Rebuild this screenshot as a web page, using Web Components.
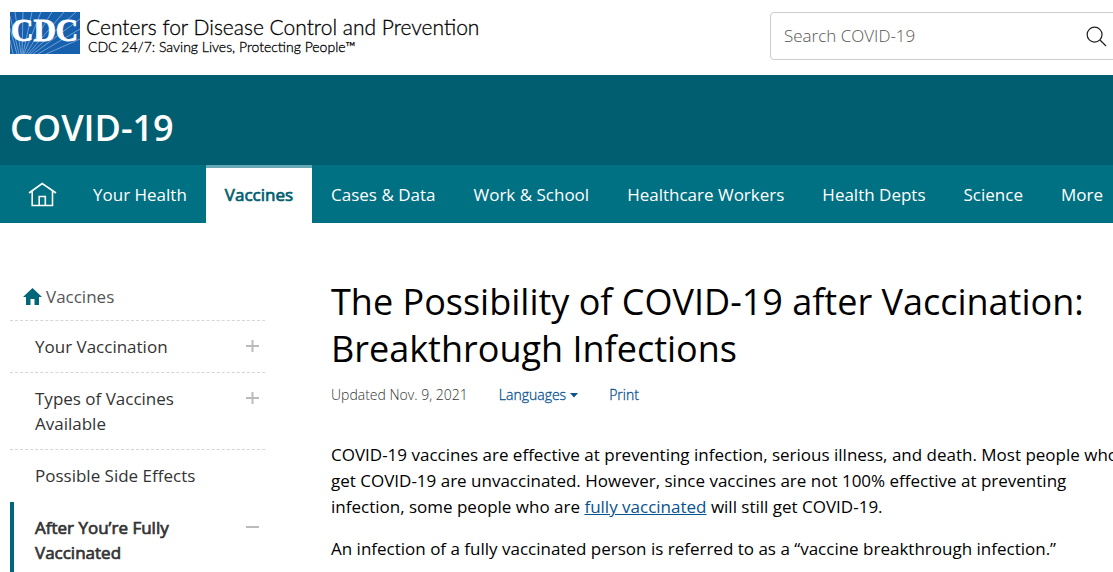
<!DOCTYPE html>
<html lang="en">
<head>
<meta charset="utf-8">
<title>The Possibility of COVID-19 after Vaccination: Breakthrough Infections</title>
<style>
  html, body { margin: 0; background: #fff; }
  body { font: 17px/26px "Open Sans", "Noto Sans", sans-serif; color: #000; overflow: hidden; }
</style>
</head>
<body>
<cdc-header></cdc-header>
<site-banner>COVID-19</site-banner>
<topic-nav></topic-nav>
<page-layout>
  <side-nav slot="side">
    <side-item mark="+">Your Vaccination</side-item>
    <side-item mark="+">Types of Vaccines Available</side-item>
    <side-item>Possible Side Effects</side-item>
    <side-item mark="-" current>After You’re Fully Vaccinated</side-item>
  </side-nav>
  <article-body>
    <span slot="title">The Possibility of COVID-19 after Vaccination: Breakthrough Infections</span>
    <span slot="date">Updated Nov. 9, 2021</span>
  </article-body>
</page-layout>

<script>
const define = (name, html, setup) => customElements.define(name, class extends HTMLElement {
  constructor() {
    super();
    this.attachShadow({ mode: "open" }).innerHTML = html;
  }
  connectedCallback() { if (setup) setup(this, this.shadowRoot); }
});

define("cdc-logo", `
<style>
  :host { display: block; }
  a { display: flex; gap: 6px; color: #000; text-decoration: none; }
  svg { display: block; flex: none; }
  .words { display: grid; align-content: start; padding-top: 3px; white-space: nowrap; font-family: Lato, sans-serif; }
  .name { font-size: 21px; line-height: 24px; font-weight: 300; -webkit-text-stroke: 0.3px #000; }
  .tag { font-size: 14px; line-height: 16px; padding-left: 2px; font-weight: 300; -webkit-text-stroke: 0.3px #000; }
</style>
<a href="#">
  <svg width="70" height="42" viewBox="0 0 70 42" role="img" aria-label="CDC">
    <rect width="70" height="42" fill="#1660ad"/>
    <g stroke="#a9cdf0" stroke-width="0.6" fill="none">
      <path d="M7 42L0 16M9 42L0 4M11 42L5 0M12 42L13 0M13 42L22 0M14 42L31 0M16 42L42 0M18 42L54 0M20 42L66 0M23 42L70 7M28 42L70 17M36 42L70 27M3 42L0 28"/>
    </g>
    <text x="1" y="29" font-family="Liberation Serif, serif" font-weight="700" font-size="31" fill="#fff" stroke="#fff" stroke-width="0.8">CDC</text>
  </svg>
  <span class="words">
    <span class="name">Centers for Disease Control and Prevention</span>
    <span class="tag">CDC 24/7: Saving Lives, Protecting People™</span>
  </span>
</a>`);

define("site-search", `
<style>
  :host { display: block; }
  form { display: flex; align-items: center; box-sizing: border-box; height: 48px; border: 1px solid #ccc; border-radius: 4px; background: #fff; }
  input { flex: 1; min-width: 0; border: 0; outline: 0; background: none; padding: 0 13px; font: 300 17px/26px "Open Sans", sans-serif; color: #333; }
  input::placeholder { color: #555; opacity: 1; }
  button { border: 0; background: none; padding: 0; margin-right: 25px; }
  svg { display: block; }
</style>
<form role="search">
  <input type="text" aria-label="Search COVID-19" placeholder="Search COVID-19">
  <button type="button" aria-label="Search">
    <svg width="21" height="21" viewBox="0 0 22 22" fill="none" stroke="#222" stroke-width="1.300"><circle cx="9" cy="9" r="7.800"/><path d="M14.600 14.600L21 21"/></svg>
  </button>
</form>`);

define("cdc-header", `
<style>
  :host { display: block; }
  header { display: flex; justify-content: space-between; align-items: flex-start; height: 63px; padding: 12px 0 0 10px; margin-right: -20px; }
  site-search { flex: 0 0 363px; }
</style>
<header><cdc-logo></cdc-logo><site-search></site-search></header>`);

define("site-banner", `
<style>
  :host { display: block; background: #005e70; color: #fff; padding: 27px 10px 11px; }
  div { font-size: 36px; line-height: 52px; font-weight: 600; }
</style>
<div><slot></slot></div>`);

define("topic-nav", `
<style>
  :host { display: block; background: #007083; }
  nav { display: flex; padding-left: 10px; }
  a { flex: none; display: flex; align-items: center; height: 54px; padding: 0 19px 1px; border-top: 3px solid transparent; color: #fff; text-decoration: none; white-space: nowrap; }
  a[aria-current] { background: #fff; border-top-color: #66a9b5; color: #005e70; -webkit-text-stroke: 0.7px #005e70; background-clip: padding-box; }
  svg { display: block; overflow: visible; }
</style>
<nav aria-label="Topics">
  <a href="#" aria-label="Home"><svg width="26" height="25" viewBox="0 0 26 25" fill="none" stroke="#fff" stroke-width="1.600"><path d="M0 10L13.200 0.500L27 10M3.200 8V22.500H23.500V8M10.200 22.500V13.500H16.300V22.500"/></svg></a>
  <a href="#">Your Health</a>
  <a href="#" aria-current="page">Vaccines</a>
  <a href="#">Cases &amp; Data</a>
  <a href="#">Work &amp; School</a>
  <a href="#">Healthcare Workers</a>
  <a href="#">Health Depts</a>
  <a href="#">Science</a>
  <a href="#">More</a>
</nav>`);

define("page-layout", `
<style>
  :host { display: grid; grid-template-columns: 255px minmax(0, 1fr); column-gap: 66px; padding: 55px 0 0 10px; margin-right: -20px; }
</style>
<slot name="side"></slot>
<main><slot></slot></main>`);

define("side-nav", `
<style>
  :host { display: block; line-height: 25px; padding-top: 6px; }
  .home { display: flex; align-items: center; gap: 4px; padding: 0 0 11px 13px; color: #555; text-decoration: none; }
  svg { display: block; }
</style>
<nav aria-label="Vaccines">
  <a class="home" href="#"><svg width="19" height="17" viewBox="0 0 19 17" fill="#006778"><path d="M9.500 0L19 9H16V17H11.500V11H7.500V17H3V9H0Z"/></svg>Vaccines</a>
  <slot></slot>
</nav>`);

define("side-item", `
<style>
  :host { display: block; border-top: 1px dashed #d6d6d6; }
  :host([current]) { border-top-color: transparent; -webkit-text-stroke: 0.7px #333; }
  .row { display: flex; justify-content: space-between; align-items: flex-start; padding: 13px 6px 13px 21px; border-left: 4px solid transparent; }
  :host([current]) .row { border-left-color: #006778; }
  a { width: 170px; color: #333; text-decoration: none; }
  button { border: 0; background: none; padding: 6px 0 0; }
  button[hidden] { display: none; }
  svg { display: block; }
</style>
<div class="row">
  <a href="#"><slot></slot></a>
  <button type="button" aria-label="Toggle section" hidden><svg width="13" height="13" viewBox="0 0 13 13" stroke="#bbb" stroke-width="2"><path d="M0 6H13"/><path class="v" d="M6.500 0V12"/></svg></button>
</div>`, (el, root) => {
  const mark = el.getAttribute("mark");
  root.querySelector("button").hidden = !mark;
  if (mark === "-") root.querySelector(".v").remove();
});

define("article-body", `
<style>
  :host { display: block; }
  h1 { margin: 0; font-size: 36px; line-height: 47px; font-weight: 400; max-width: 770px; }
  .meta { display: flex; margin: 11px 0 35px; font-size: 14px; line-height: 24px; gap: 31px; color: #333; font-weight: 300; }
  .meta a, .meta button { color: #075290; text-decoration: none; font: 300 14px/24px "Open Sans", sans-serif; border: 0; background: none; padding: 0; display: flex; align-items: center; gap: 4px; -webkit-text-stroke: 0.3px #075290; }
  p { margin: 0 0 16px; max-width: 802px; }
  p a { color: #075290; }
</style>
<h1><slot name="title"></slot></h1>
<div class="meta">
  <slot name="date"></slot>
  <button type="button">Languages<svg width="8" height="5" viewBox="0 0 8 5" fill="#075290"><path d="M0 0H8L4 4.500Z"/></svg></button>
  <a href="#">Print</a>
</div>
<p>COVID-19 vaccines are effective at preventing infection, serious illness, and death. Most people who get COVID-19 are unvaccinated. However, since vaccines are not 100% effective at preventing infection, some people who are <a href="#">fully vaccinated</a> will still get COVID-19.</p>
<p>An infection of a fully vaccinated person is referred to as a “vaccine breakthrough infection.”</p>`);
</script>
</body>
</html>
